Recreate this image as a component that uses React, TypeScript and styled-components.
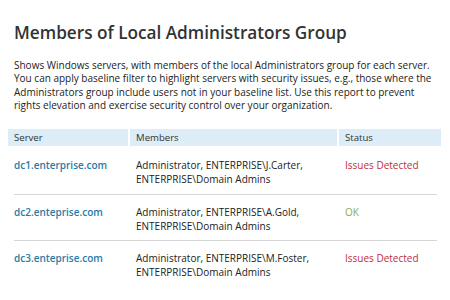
import React from 'react'
import styled, { createGlobalStyle } from 'styled-components'

const GlobalStyle = createGlobalStyle`
  html, body {
    margin: 0;
    padding: 0;
    background: #ffffff;
  }
  body {
    font-family: 'Open Sans', 'Noto Sans', Arial, sans-serif;
    color: #222222;
  }
`

const Page = styled.div`
  width: 450px;
  height: 300px;
  overflow: hidden;
  padding: 21px 8px 0 8px;
  box-sizing: border-box;
`

const Title = styled.h1`
  margin: 0 0 0 6px;
  font-size: 17.2px;
  line-height: 24px;
  font-weight: 600;
  color: #333333;
`

const Desc = styled.p`
  margin: 13.5px 0 0 6px;
  font-size: 10px;
  line-height: 13.6px;
  color: #222222;
`

const Table = styled.div`
  margin-top: 16.5px;
`

const Cols = styled.div`
  display: grid;
  grid-template-columns: 120px 207px 102px;
  column-gap: 2px;
`

const HeadCell = styled.div`
  background: #dcedf8;
  height: 17px;
  line-height: 17px;
  padding: 0 6px;
  font-size: 9.6px;
  color: #333333;
`

const Row = styled.div<{ $first?: boolean; $last?: boolean }>`
  margin: 0 5px 0 6px;
  border-bottom: ${p => (p.$last ? 'none' : '1px solid #d6d6d6')};
  padding: ${p => (p.$first ? '12px' : '10px')} 0 7.5px 0;
`

const RowCols = styled(Cols)`
  margin: 0 -5px 0 -6px;
`

const Cell = styled.div`
  padding: 0 6px;
  font-size: 10px;
  line-height: 14px;
  color: #222222;
`

const ServerCell = styled(Cell)`
  font-weight: 600;
  color: #2b7aa6;
`

const StatusCell = styled(Cell)<{ $ok?: boolean }>`
  color: ${p => (p.$ok ? '#8aae3c' : '#c0303c')};
`

const rows = [
  { server: 'dc1.enterprise.com', user: 'J.Carter', ok: false },
  { server: 'dc2.enteprise.com', user: 'A.Gold', ok: true },
  { server: 'dc3.enteprise.com', user: 'M.Foster', ok: false },
]

const App: React.FunctionComponent = () => {
  return (
    <>
      <GlobalStyle />
      <Page>
        <Title>Members of Local Administrators Group</Title>
        <Desc>
          Shows Windows servers, with members of the local Administrators group for each server.
          You can apply baseline filter to highlight servers with security issues, e.g., those where the
          Administrators group include users not in your baseline list. Use this report to prevent
          rights elevation and exercise security control over your organization.
        </Desc>
        <Table>
          <Cols>
            <HeadCell>Server</HeadCell>
            <HeadCell>Members</HeadCell>
            <HeadCell>Status</HeadCell>
          </Cols>
          {rows.map((r, i) => (
            <Row key={r.server} $first={i === 0} $last={i === rows.length - 1}>
              <RowCols>
                <ServerCell>{r.server}</ServerCell>
                <Cell>
                  Administrator, ENTERPRISE\{r.user},<br />
                  ENTERPRISE\Domain Admins
                </Cell>
                <StatusCell $ok={r.ok}>{r.ok ? 'OK' : 'Issues Detected'}</StatusCell>
              </RowCols>
            </Row>
          ))}
        </Table>
      </Page>
    </>
  )
}

export default App
